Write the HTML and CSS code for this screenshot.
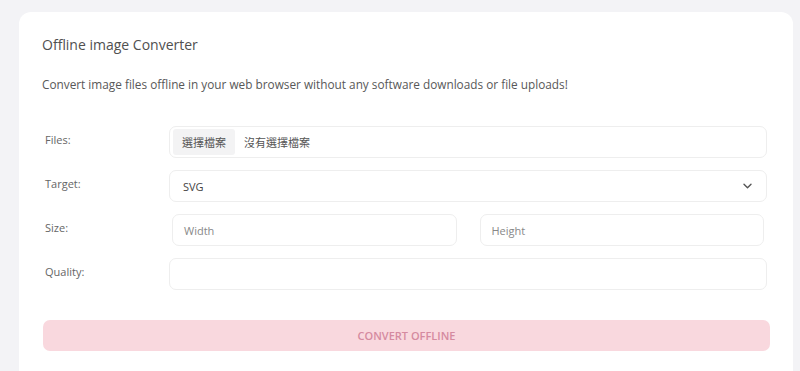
FILE: index.html
```html
<!DOCTYPE html>
<html lang="zh-Hant">
<head>
  <meta charset="UTF-8">
  <meta name="viewport" content="width=device-width, initial-scale=1.0">
  <title>Offline image Converter</title>
  <link rel="stylesheet" href="styles.css">
</head>
<body>
  <div class="card">
    <h2 class="title">Offline image Converter</h2>
    <p class="intro">Convert image files offline in your web browser without any software downloads or file uploads!</p>

    <div class="form">
      <label class="label">Files:</label>
      <div class="field file-field">
        <span class="file-btn">選擇檔案</span>
        <span class="file-name">沒有選擇檔案</span>
      </div>

      <label class="label">Target:</label>
      <div class="field select-field">
        <span>SVG</span>
        <svg class="chevron" width="9" height="6" viewBox="0 0 9 6"><path d="M1 1.2l3.5 3.5 3.5-3.5" fill="none" stroke="#555" stroke-width="1.4" stroke-linecap="round" stroke-linejoin="round"/></svg>
      </div>

      <label class="label">Size:</label>
      <div class="size-row">
        <div class="field placeholder">Width</div>
        <div class="field placeholder">Height</div>
      </div>

      <label class="label">Quality:</label>
      <div class="field"></div>
    </div>

    <button class="convert">CONVERT OFFLINE</button>
  </div>
</body>
</html>
```
FILE: styles.css
```css
body {
  margin: 0;
  background: #f3f3f6;
  font-family: "Open Sans", "Noto Sans CJK TC", sans-serif;
  color: #555;
}

.card {
  margin: 12px 7px 0 19px;
  background: #fff;
  border-radius: 12px 12px 0 0;
  padding: 23px 26px 0 23px;
  height: calc(100vh - 12px);
  box-sizing: border-box;
}

.title {
  margin: 0;
  font-size: 14px;
  font-weight: 500;
  color: #505050;
}

.intro {
  margin: 22px 0 0;
  font-size: 11.8px;
  color: #585858;
}

.form {
  display: grid;
  grid-template-columns: 127px 1fr;
  row-gap: 12px;
  margin-top: 34px;
}

.label {
  font-size: 11px;
  color: #666;
  padding-left: 3px;
  padding-top: 6px;
}

.field {
  height: 30px;
  border: 1px solid #eee;
  border-radius: 7px;
  display: flex;
  align-items: center;
  font-size: 11px;
  color: #444;
  padding: 0 13px;
}

.file-field {
  padding: 0 3px;
}

.file-btn {
  background: #f3f3f4;
  height: 26px;
  display: flex;
  align-items: center;
  padding: 0 9px;
  font-size: 11px;
  color: #555;
  border-radius: 3px;
}

.file-name {
  margin-left: 9px;
  color: #555;
}

.select-field {
  justify-content: space-between;
}

.chevron {
  margin-right: 1px;
}

.size-row {
  display: grid;
  grid-template-columns: 1fr 1fr;
  column-gap: 23px;
  padding: 0 3px;
}

.placeholder {
  color: #888;
  padding: 0 11px;
}

.convert {
  display: block;
  width: 727px;
  margin: 30px 0 0 1px;
  height: 31px;
  border: none;
  border-radius: 7px;
  background: #f9d8de;
  color: #d58aa0;
  font-family: "Open Sans", sans-serif;
  font-size: 11px;
  font-weight: 600;
  cursor: pointer;
}
```
